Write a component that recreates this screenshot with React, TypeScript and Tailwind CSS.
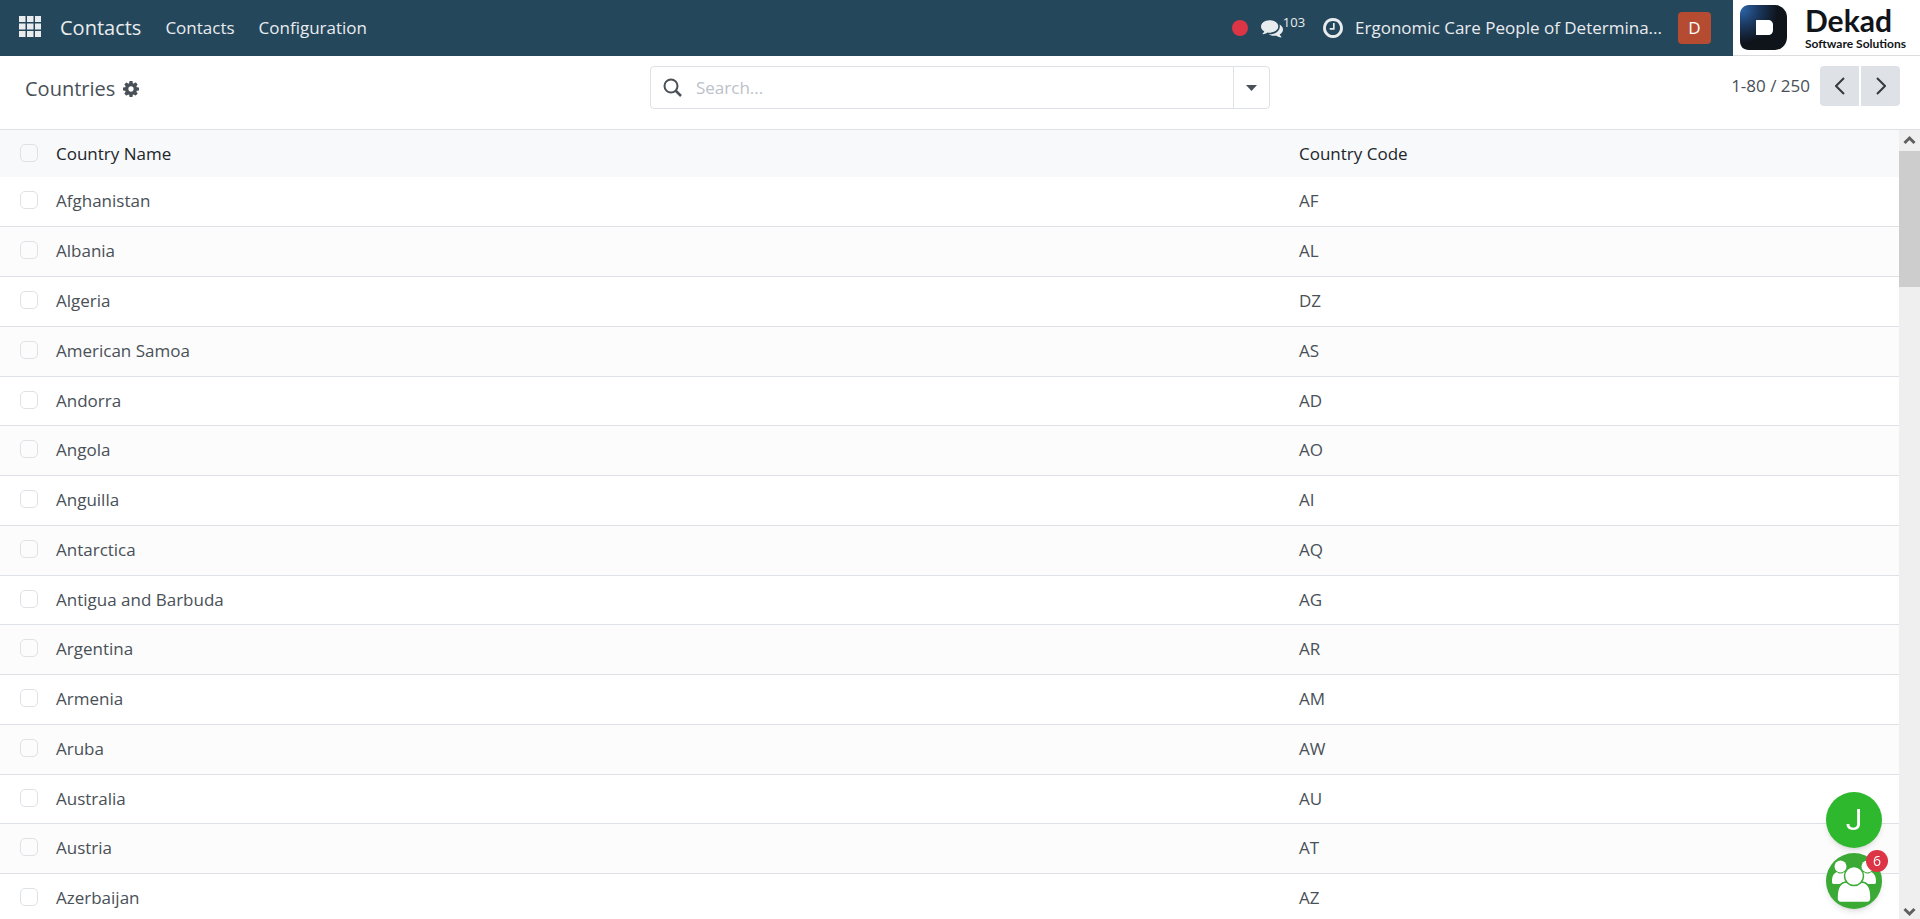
import { useState } from 'react'

const countries = [
  { name: 'Afghanistan', code: 'AF' },
  { name: 'Albania', code: 'AL' },
  { name: 'Algeria', code: 'DZ' },
  { name: 'American Samoa', code: 'AS' },
  { name: 'Andorra', code: 'AD' },
  { name: 'Angola', code: 'AO' },
  { name: 'Anguilla', code: 'AI' },
  { name: 'Antarctica', code: 'AQ' },
  { name: 'Antigua and Barbuda', code: 'AG' },
  { name: 'Argentina', code: 'AR' },
  { name: 'Armenia', code: 'AM' },
  { name: 'Aruba', code: 'AW' },
  { name: 'Australia', code: 'AU' },
  { name: 'Austria', code: 'AT' },
  { name: 'Azerbaijan', code: 'AZ' },
]

function CommentsIcon() {
  return (
    <svg viewBox="0 0 1792 1792" className="size-[22px]" fill="currentColor" aria-hidden="true">
      <path d="M1408 768q0 139-94 257t-256.5 186.5-353.5 68.5q-86 0-176-16-124 88-278 128-36 9-86 16h-3q-11 0-20.5-8t-11.5-21q-1-3-1-6.5t.5-6.5 2-6l2.5-5t3.5-5.5 4-5 4.5-5 4-4.500q5-6 23-25t26-29.5 22.5-29 25-38.5 20.5-44q-124-72-195-177t-71-224q0-139 94-257t256.5-186.5 353.5-68.5 353.5 68.5 256.5 186.5 94 257zm384 256q0 120-71 224.5t-195 176.5q10 24 20.5 44t25 38.5 22.5 29 26 29.5 23 25q1 1 4 4.5t4.5 5 4 5 3.5 5.5l2.5 5t2 6 .5 6.5-1 6.5q-3 14-13 22t-22 7q-50-7-86-16-154-40-278-128-90 16-176 16-271 0-472-132 58 4 88 4 161 0 309-45t264-129q125-92 192-212t67-254q0-77-23-152 129 71 204 178t75 230z" />
    </svg>
  )
}

function ClockIcon() {
  return (
    <svg viewBox="128 128 1536 1536" className="size-5" fill="currentColor" aria-hidden="true">
      <path d="M1024 544v448q0 14-9 23t-23 9h-320q-14 0-23-9t-9-23v-64q0-14 9-23t23-9h224v-352q0-14 9-23t23-9h64q14 0 23 9t9 23zm416 352q0-148-73-273t-198-198-273-73-273 73-198 198-73 273 73 273 198 198 273 73 273-73 198-198 73-273zm224 0q0 209-103 385.5t-279.5 279.5-385.5 103-385.5-103-279.5-279.5-103-385.5 103-385.5 279.5-279.5 385.5-103 385.5 103 279.5 279.5 103 385.5z" />
    </svg>
  )
}

function CogIcon() {
  return (
    <svg viewBox="0 128 1536 1536" className="size-4" fill="currentColor" fillRule="evenodd" aria-hidden="true">
      <path d="M1024 896q0 106-75 181t-181 75-181-75-75-181 75-181 181-75 181 75 75 181zm512-109v222q0 12-8 23t-20 13l-185 28q-19 54-39 91 35 50 107 138 10 12 10 25t-9 23q-27 37-99 108t-94 71q-12 0-26-9l-138-108q-44 23-91 38-16 136-29 186-7 28-36 28h-222q-14 0-24.5-8.5t-11.5-21.5l-28-184q-49-16-90-37l-141 107q-10 9-25 9-14 0-25-11-126-114-165-168-7-10-7-23 0-12 8-23 15-21 51-66.5t54-70.5q-27-50-41-99l-183-27q-13-2-21-12.5t-8-23.5v-222q0-12 8-23t19-13l186-28q14-46 39-92-40-57-107-138-10-12-10-24 0-10 9-23 26-36 98.5-107.5t94.5-71.5q13 0 26 10l138 107q44-23 91-38 16-136 29-186 7-28 36-28h222q14 0 24.5 8.5t11.5 21.5l28 184q49 16 90 37l142-107q9-9 24-9 13 0 25 10 129 119 165 170 7 8 7 22 0 12-8 23-15 21-51 66.5t-54 70.5q26 50 41 98l183 28q13 2 21 12.5t8 23.5z" />
    </svg>
  )
}

function GroupIcon() {
  return (
    <svg viewBox="0 0 56 56" className="size-14" aria-hidden="true">
      <g fill="#fff">
        <circle cx="14.500" cy="13.500" r="6" />
        <circle cx="41.500" cy="13.500" r="6" />
        <path d="M6 28c0-5 2-8 5-9 2 2 5 2 7 0l3 1v11H8c-2 0-2-1-2-3z" />
        <path d="M50 28c0-5-2-8-5-9-2 2-5 2-7 0l-3 1v11h13c2 0 2-1 2-3z" />
      </g>
      <g fill="#fff" stroke="#3aaa35" strokeWidth="1.500">
        <path d="M11 45c0-9 2-16 10-16 4 4 10 4 14 0 8 0 10 7 10 16 0 3-2 4.500-4 4.500H15c-2 0-4-1.500-4-4.500z" />
        <circle cx="28" cy="23" r="9.500" />
      </g>
    </svg>
  )
}

function Logo() {
  return (
    <a href="#" className="flex h-full w-[187px] shrink-0 items-center border-b border-[#dcdcdc] bg-white pl-[7px] text-[#111418]">
      <svg viewBox="0 0 47 45" className="h-[45px] w-[47px] shrink-0" aria-hidden="true">
        <defs>
          <radialGradient id="mark" cx="0.05" cy="0.1" r="0.75">
            <stop offset="0" stopColor="#2a63a5" />
            <stop offset="0.45" stopColor="#1b3a62" />
            <stop offset="1" stopColor="#0f141b" />
          </radialGradient>
        </defs>
        <path d="M9 0h26c7 0 12 6 12 12v20c0 7-5 13-12 13H9c-6 0-9-4-9-9V9c0-5 4-9 9-9z" fill="url(#mark)" />
        <path d="M17 15h11c3 0 5 2 5 5v5c0 3-2 5-5 5H17c-1 0-1 0-1-1V16c0-1 0-1 1-1z" fill="#fff" />
      </svg>
      <span className="flex flex-col pl-[18px] font-['Lato','Liberation_Sans',sans-serif] font-bold">
        <span className="text-[30px] leading-8">Dekad</span>
        <span className="text-[12px] leading-4 whitespace-nowrap">Software Solutions</span>
      </span>
    </a>
  )
}

function Navbar() {
  return (
    <header className="flex h-14 shrink-0 items-center bg-[#25475b] text-[#e9ecef]">
      <button type="button" aria-label="Apps" className="mr-[19px] mb-1 ml-[19px]">
        <svg viewBox="0 0 22 21" className="h-[21px] w-[22px]" fill="currentColor" aria-hidden="true">
          {[0, 7.5, 15].map((y) =>
            [0, 8, 16].map((x) => <rect key={`${x}-${y}`} x={x} y={y} width="6.500" height="6" />)
          )}
        </svg>
      </button>
      <a href="#" className="text-[20px]">Contacts</a>
      <nav className="flex gap-6 pl-6">
        <a href="#">Contacts</a>
        <a href="#">Configuration</a>
      </nav>
      <div className="ml-auto flex h-full items-center">
        <span className="mr-[13px] size-4 rounded-full bg-[#dc3545]" />
        <button type="button" aria-label="Messages" className="mr-[18px] flex items-center">
          <CommentsIcon />
          <span className="pb-3 text-[13px] leading-4">103</span>
        </button>
        <button type="button" aria-label="Activities" className="mr-3">
          <ClockIcon />
        </button>
        <button type="button" className="mr-4">Ergonomic Care People of Determina...</button>
        <button type="button" className="mr-[22px] flex h-8 w-[33px] items-center justify-center rounded bg-[#b54c31] text-white">
          D
        </button>
        <Logo />
      </div>
    </header>
  )
}

function ControlPanel() {
  const [query, setQuery] = useState('')

  return (
    <div className="grid h-[73px] shrink-0 grid-cols-[1fr_620px_1fr] items-start pt-[10px]">
      <div className="flex h-[46px] items-center gap-2 pl-[25px]">
        <h1 className="text-[20px]">Countries</h1>
        <button type="button" aria-label="Actions">
          <CogIcon />
        </button>
      </div>
      <div className="flex h-[43px] rounded border border-[#dee2e6]">
        <label htmlFor="search" className="flex w-[45px] items-center pl-3">
          <svg viewBox="0 0 20 20" className="size-5" fill="none" stroke="currentColor" strokeWidth="2" aria-hidden="true">
            <circle cx="8" cy="8" r="6.500" />
            <path d="M12.500 12.500L18 18" strokeWidth="2.500" />
          </svg>
        </label>
        <input
          id="search"
          type="text"
          aria-label="Search"
          placeholder="Search..."
          value={query}
          onChange={(e) => setQuery(e.target.value)}
          className="min-w-0 flex-1 outline-none placeholder:text-[#bcc1ca]"
        />
        <button type="button" aria-label="Toggle filters" className="flex w-9 items-center justify-center border-l border-[#dee2e6]">
          <svg viewBox="0 0 11 6" className="h-[6px] w-[11px]" fill="currentColor" aria-hidden="true">
            <path d="M0 0h11L5.500 6z" />
          </svg>
        </button>
      </div>
      <div className="flex h-10 items-center justify-end gap-[2px] pr-5">
        <span className="pr-2">1-80 / 250</span>
        <button type="button" aria-label="Previous" className="flex h-10 w-[39px] items-center justify-center rounded-l bg-[#dee2e6]">
          <svg viewBox="0 0 10 18" className="h-[18px] w-[10px]" fill="none" stroke="#343a40" strokeWidth="2" aria-hidden="true">
            <path d="M9 1L1 9l8 8" />
          </svg>
        </button>
        <button type="button" aria-label="Next" className="flex h-10 w-[39px] items-center justify-center rounded-r bg-[#dee2e6]">
          <svg viewBox="0 0 10 18" className="h-[18px] w-[10px]" fill="none" stroke="#343a40" strokeWidth="2" aria-hidden="true">
            <path d="M1 1l8 8-8 8" />
          </svg>
        </button>
      </div>
    </div>
  )
}

function RowCheckbox({ label }: { label: string }) {
  return (
    <input
      type="checkbox"
      aria-label={label}
      className="block size-[18px] appearance-none rounded-[5px] border border-[#dee2e6] checked:bg-[#25475b]"
    />
  )
}

function CountryTable() {
  return (
    <table className="w-full table-fixed border-collapse text-left">
      <colgroup>
        <col className="w-14" />
        <col />
        <col className="w-[600px]" />
      </colgroup>
      <thead>
        <tr className="h-[47px] bg-[#f8f9fb] text-[#212529]">
          <th className="pl-5 pb-px">
            <RowCheckbox label="Select all" />
          </th>
          <th className="font-normal">Country Name</th>
          <th className="font-normal">Country Code</th>
        </tr>
      </thead>
      <tbody>
        {countries.map((country) => (
          <tr key={country.code} className="h-[50px] border-b border-[#dee2e6] even:bg-[#fcfcfc] nth-[4n+1]:h-[49px]">
            <td className="pl-5 pb-[2px]">
              <RowCheckbox label={`Select ${country.name}`} />
            </td>
            <td>{country.name}</td>
            <td>{country.code}</td>
          </tr>
        ))}
      </tbody>
    </table>
  )
}

function Scrollbar() {
  return (
    <div className="flex w-[21px] shrink-0 flex-col bg-[#efefef]" aria-hidden="true">
      <svg viewBox="0 0 21 21" className="h-[21px]" fill="none" stroke="#606060" strokeWidth="3">
        <path d="M5.500 13l5-5 5 5" />
      </svg>
      <div className="h-[136px] bg-[#cdcdcd]" />
      <svg viewBox="0 0 21 21" className="mt-auto h-[21px]" fill="none" stroke="#606060" strokeWidth="3">
        <path d="M5.500 11l5 5 5-5" />
      </svg>
    </div>
  )
}

function ChatBubbles() {
  return (
    <div className="fixed right-[38px] bottom-[10px] flex flex-col gap-[5px]">
      <button type="button" className="flex size-14 items-center justify-center rounded-full bg-[#2eb82e] font-['Roboto',sans-serif] text-[30px] text-white shadow-md">
        J
      </button>
      <button type="button" aria-label="Group chat" className="relative size-14 rounded-full bg-[#3aaa35] shadow-md">
        <GroupIcon />
        <span className="absolute -top-[3px] -right-[6px] flex size-[22px] items-center justify-center rounded-full bg-[#dc3545] text-[14px] text-white">
          6
        </span>
      </button>
    </div>
  )
}

export default function App() {
  return (
    <div className="flex h-screen flex-col overflow-hidden bg-white font-['Open_Sans','Noto_Sans',sans-serif] text-[17px] leading-6 text-[#495057]">
      <Navbar />
      <ControlPanel />
      <main className="flex min-h-0 flex-1 border-t border-[#dee2e6]">
        <div className="min-w-0 flex-1 overflow-hidden">
          <CountryTable />
        </div>
        <Scrollbar />
      </main>
      <ChatBubbles />
    </div>
  )
}
